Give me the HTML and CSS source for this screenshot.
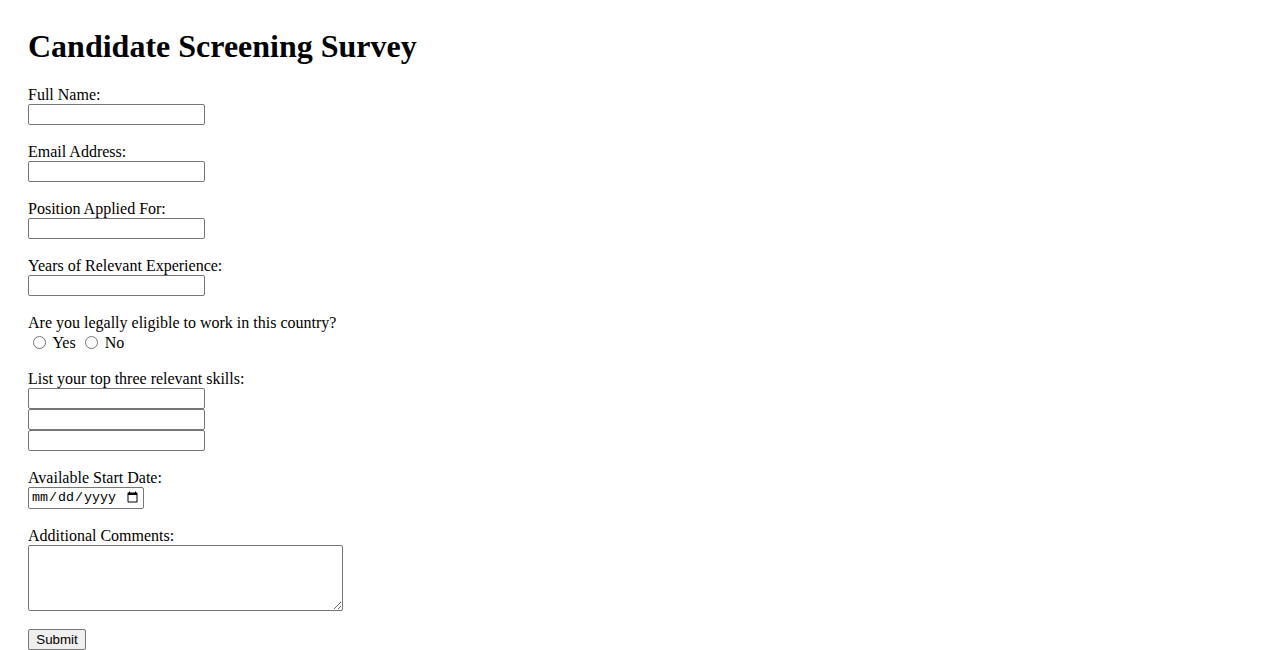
FILE: index.html
```html
<!DOCTYPE html>
<html>
<head>
<meta charset="utf-8">
<title>Candidate Screening Survey</title>
<link rel="stylesheet" href="styles.css">
</head>
<body>
<h1 class="title">Candidate Screening Survey</h1>
<form class="survey">
  <div class="field">
    <label class="label" for="name">Full Name:</label>
    <input class="text" type="text" id="name">
  </div>
  <div class="field">
    <label class="label" for="email">Email Address:</label>
    <input class="text" type="email" id="email">
  </div>
  <div class="field">
    <label class="label" for="position">Position Applied For:</label>
    <input class="text" type="text" id="position">
  </div>
  <div class="field">
    <label class="label" for="years">Years of Relevant Experience:</label>
    <input class="text" type="text" id="years">
  </div>
  <div class="field">
    <div class="label">Are you legally eligible to work in this country?</div>
    <div class="radios">
      <label><input class="radio" type="radio" name="eligible" value="yes"> Yes</label>
      <label><input class="radio" type="radio" name="eligible" value="no"> No</label>
    </div>
  </div>
  <div class="field">
    <div class="label">List your top three relevant skills:</div>
    <input class="text" type="text">
    <input class="text" type="text">
    <input class="text" type="text">
  </div>
  <div class="field">
    <label class="label" for="start">Available Start Date:</label>
    <input class="date" type="date" id="start">
  </div>
  <div class="field">
    <label class="label" for="comments">Additional Comments:</label>
    <textarea class="comments" id="comments"></textarea>
  </div>
  <button class="submit" type="submit">Submit</button>
</form>
</body>
</html>
```

FILE: styles.css
```css
body {
  margin: 0;
  padding: 28px;
  font-family: "Liberation Serif", "Times New Roman", serif;
  font-size: 16px;
  color: #000;
  background: #fff;
}
.title {
  font-size: 32px;
  font-weight: bold;
  margin: 0 0 21px 0;
  line-height: 37px;
}
.survey {
  margin: 0;
}
.field {
  margin-bottom: 18px;
}
.label {
  display: block;
  height: 18px;
  line-height: 18px;
}
.text {
  display: block;
  box-sizing: border-box;
  width: 177px;
  height: 21px;
  margin: 0;
  padding: 1px 2px;
  border: 1px solid #767676;
  border-radius: 2px;
  font-family: "Liberation Sans", Arial, sans-serif;
  font-size: 13.33px;
}
.radios {
  height: 20px;
  line-height: 20px;
  padding-top: 1px;
  box-sizing: border-box;
}
.radio {
  width: 13px;
  height: 13px;
  margin: 3px 3px 0 5px;
  vertical-align: -1px;
}
.date {
  display: block;
  box-sizing: border-box;
  width: 116px;
  height: 22px;
  margin: 0;
  padding: 1px 2px;
  border: 1px solid #767676;
  border-radius: 2px;
  font-family: "Liberation Mono", monospace;
  font-size: 13.33px;
}
.comments {
  display: block;
  box-sizing: border-box;
  width: 315px;
  height: 66px;
  margin: 0;
  border: 1px solid #767676;
  border-radius: 2px;
  resize: both;
}
.submit {
  display: block;
  box-sizing: border-box;
  width: 58px;
  height: 21px;
  margin: 0;
  padding: 1px 6px;
  font-family: "Liberation Sans", Arial, sans-serif;
  font-size: 13.33px;
  background: #efefef;
  border: 1px solid #767676;
  border-radius: 2px;
  color: #000;
}
```
